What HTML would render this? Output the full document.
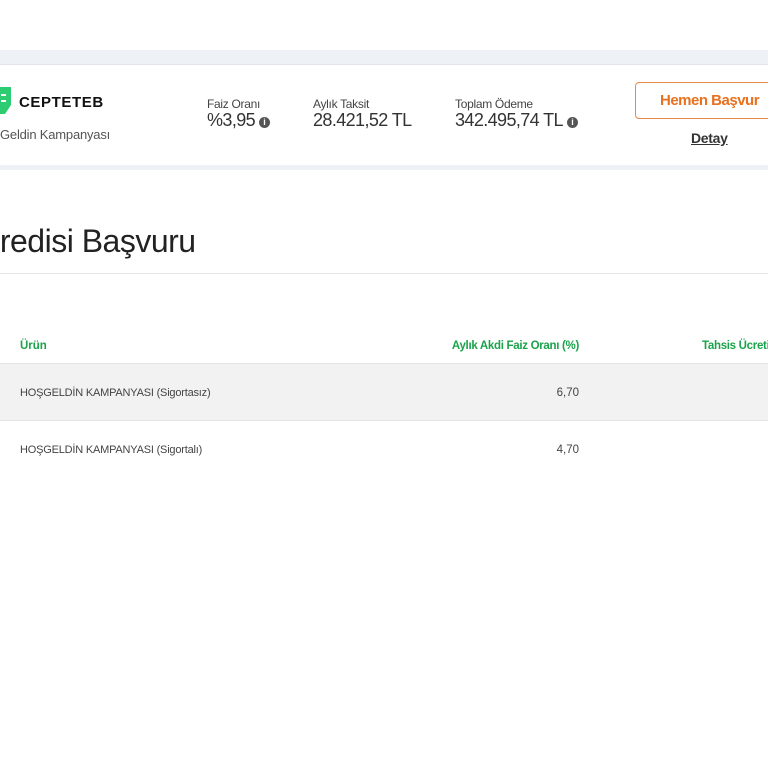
<!DOCTYPE html>
<html><head><style>
body{margin:0;width:768px;height:768px;overflow:hidden;background:#fff;font-family:"Liberation Sans",sans-serif;position:relative}
.a{position:absolute;white-space:nowrap}
.info{display:inline-block;width:11px;height:11px;border-radius:50%;background:#555;color:#fff;font-size:9px;line-height:11px;text-align:center;font-weight:bold;vertical-align:1px;margin-left:4px;letter-spacing:0}
</style></head><body>
<div class="a" style="left:0;top:50px;width:768px;height:14px;background:#eef1f6"></div>
<div class="a" style="left:0;top:64px;width:768px;height:1px;background:#e2e5ea"></div>
<div class="a" style="left:0;top:165px;width:768px;height:5px;background:#eef1f6"></div>
<svg class="a" style="left:0;top:87px" width="12" height="28"><path d="M0 0H11V18L5 27H0Z" fill="#2ecc71"/><path d="M1 8h5M1 14h5" stroke="#fff" stroke-width="2"/></svg>
<div class="a" style="left:19px;top:94px;font-size:15px;font-weight:bold;letter-spacing:0.6px;color:#111">CEPTETEB</div>
<div class="a" style="left:0;top:127px;font-size:13px;color:#555;letter-spacing:-0.2px">Geldin Kampanyası</div>
<div class="a" style="left:207px;top:97px;font-size:12px;color:#444;letter-spacing:-0.3px">Faiz Oranı</div>
<div class="a" style="left:207px;top:110px;font-size:18px;color:#333;letter-spacing:-0.6px">%3,95<span class="info">i</span></div>
<div class="a" style="left:313px;top:97px;font-size:12px;color:#444;letter-spacing:-0.3px">Aylık Taksit</div>
<div class="a" style="left:313px;top:110px;font-size:18px;color:#333;letter-spacing:-0.6px">28.421,52 TL</div>
<div class="a" style="left:455px;top:97px;font-size:12px;color:#444;letter-spacing:-0.3px">Toplam Ödeme</div>
<div class="a" style="left:455px;top:110px;font-size:18px;color:#333;letter-spacing:-0.6px">342.495,74 TL<span class="info">i</span></div>
<div class="a" style="left:635px;top:82px;width:150px;height:37px;border:1px solid #e8884a;border-radius:4px;box-sizing:border-box"></div>
<div class="a" style="left:660px;top:92px;font-size:15px;font-weight:bold;color:#e8701e;letter-spacing:-0.5px">Hemen Başvur</div>
<div class="a" style="left:691px;top:130px;font-size:14px;font-weight:bold;color:#333;text-decoration:underline;letter-spacing:-0.3px">Detay</div>
<div class="a" style="left:-21px;top:223px;font-size:32px;color:#222;letter-spacing:-0.5px">Kredisi Başvuru</div>
<div class="a" style="left:0;top:273px;width:768px;height:1px;background:#e6e6e6"></div>
<div class="a" style="left:20px;top:340px;font-size:11.5px;font-weight:bold;color:#1aa34a">Ürün</div>
<div class="a" style="right:189px;top:340px;font-size:11.5px;font-weight:bold;color:#1aa34a;letter-spacing:-0.3px">Aylık Akdi Faiz Oranı (%)</div>
<div class="a" style="left:702px;top:340px;font-size:11.5px;font-weight:bold;color:#1aa34a;letter-spacing:-0.3px">Tahsis Ücreti</div>
<div class="a" style="left:0;top:363px;width:768px;height:58px;background:#f2f2f2;border-top:1px solid #e4e4e4;border-bottom:1px solid #e4e4e4;box-sizing:border-box"></div>
<div class="a" style="left:20px;top:387px;font-size:11px;color:#444;letter-spacing:-0.2px">HOŞGELDİN KAMPANYASI (Sigortasız)</div>
<div class="a" style="right:189px;top:387px;font-size:11.5px;color:#444">6,70</div>
<div class="a" style="left:20px;top:444px;font-size:11px;color:#444;letter-spacing:-0.2px">HOŞGELDİN KAMPANYASI (Sigortalı)</div>
<div class="a" style="right:189px;top:444px;font-size:11.5px;color:#444">4,70</div>
</body></html>
